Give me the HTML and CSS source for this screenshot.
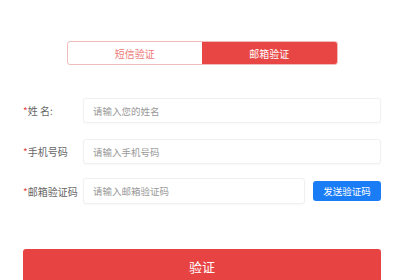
FILE: index.html
```html
<!DOCTYPE html>
<html lang="zh">
<head>
<meta charset="utf-8">
<link rel="stylesheet" href="styles.css">
</head>
<body>
<div class="page">
  <div class="tabs">
    <div class="tab">短信验证</div>
    <div class="tab active">邮箱验证</div>
  </div>
  <div class="form">
    <div class="row">
      <label class="label"><span class="req">*</span>姓&nbsp;名:</label>
      <input class="input" placeholder="请输入您的姓名">
    </div>
    <div class="row">
      <label class="label"><span class="req">*</span>手机号码</label>
      <input class="input" placeholder="请输入手机号码">
    </div>
    <div class="row row3">
      <label class="label"><span class="req">*</span>邮箱验证码</label>
      <input class="input" placeholder="请输入邮箱验证码">
      <button class="send">发送验证码</button>
    </div>
  </div>
  <button class="submit">验证</button>
</div>
</body>
</html>
```
FILE: styles.css
```css
* { box-sizing: border-box; }
html, body { margin: 0; padding: 0; background: #fff; }
body {
  width: 400px; height: 280px; overflow: hidden;
  font-family: "Noto Sans CJK SC", "Noto Sans", sans-serif;
}
.page {
  padding: 41px 19px 0 23px;
}
.tabs {
  display: flex;
  width: 271px;
  height: 24px;
  margin: 0 auto;
  border: 1px solid #f0bcbc;
  border-radius: 3px;
  overflow: hidden;
}
.tab {
  flex: 1;
  display: flex; align-items: center; justify-content: center;
  font-size: 10px;
  color: #ec7a7a;
}
.tab.active {
  background: #e84545;
  color: #fff;
}
.form {
  margin-top: 33px;
}
.row {
  display: flex;
  align-items: center;
  height: 25px;
  margin-bottom: 16px;
}
.row + .row { margin-bottom: 14px; }
.row3 { height: 26px; margin-bottom: 0; }
.label {
  width: 60px;
  flex: none;
  font-size: 10px;
  color: #666;
  white-space: nowrap;
}
.req { color: #e84545; }
.input {
  flex: 1;
  min-width: 0;
  height: 100%;
  border: 1px solid #f0f0f0;
  border-radius: 3px;
  box-shadow: 0 1px 2px rgba(0,0,0,0.03);
  padding: 0 9px;
  font-family: inherit;
  font-size: 9.5px;
  color: #333;
  outline: none;
}
.input::placeholder { color: #999; }
.send {
  flex: none;
  width: 68px;
  height: 20px;
  margin-left: 8px;
  border: none;
  border-radius: 3px;
  background: #1a7df6;
  color: #fff;
  font-family: inherit;
  font-size: 9.5px;
  padding: 0;
}
.submit {
  display: block;
  width: 358px;
  height: 34px;
  margin-top: 45px;
  border: none;
  border-radius: 3px;
  background: #e84343;
  color: #fff;
  font-family: inherit;
  font-size: 13px;
  padding: 0;
}
```
